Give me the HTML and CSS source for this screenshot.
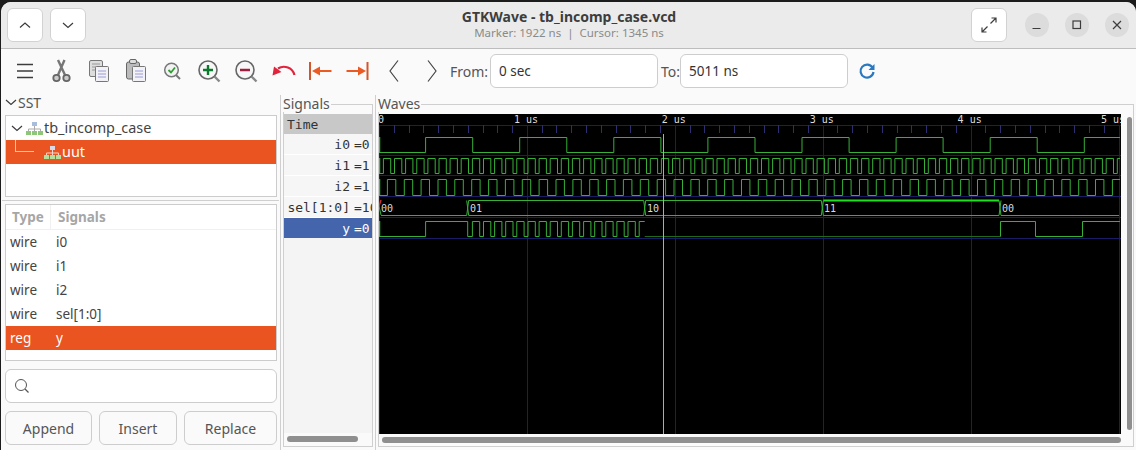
FILE: index.html
```html
<!DOCTYPE html>
<html lang="en">
<head>
    <meta charset="UTF-8">
    <meta name="viewport" content="width=device-width, initial-scale=1.0">
    <title>GTKWave - tb_incomp_case.vcd</title>
    <link rel="stylesheet" href="styles.css">
</head>
<body>
    <div class="window">
        <header class="titlebar">
            <div class="title-left">
                <button class="head-btn"><svg width="16" height="16" viewBox="0 0 16 16"><path d="M3 10.5 8 6l5 4.5" class="thin"/></svg></button>
                <button class="head-btn"><svg width="16" height="16" viewBox="0 0 16 16"><path d="M3 6l5 4.5L13 6" class="thin"/></svg></button>
            </div>
            <div class="title-text">
                <div class="title-main">GTKWave - tb_incomp_case.vcd</div>
                <div class="title-sub">Marker: 1922 ns &nbsp;|&nbsp; Cursor: 1345 ns</div>
            </div>
            <div class="title-right">
                <button class="head-btn expand"><svg width="18" height="18" viewBox="0 0 18 18"><path d="M10.5 7.5 16 2M11.5 2H16v4.5M7.5 10.5 2 16M2 11.5V16h4.500" class="thin"/></svg></button>
                <button class="win-btn"><svg width="12" height="12" viewBox="0 0 12 12"><path d="M1.500 9.500h8" class="thin"/></svg></button>
                <button class="win-btn"><svg width="12" height="12" viewBox="0 0 12 12"><rect x="2" y="2" width="7.500" height="7.500" class="thin"/></svg></button>
                <button class="win-btn"><svg width="12" height="12" viewBox="0 0 12 12"><path d="M2 2l8 8M10 2l-8 8" class="thin"/></svg></button>
            </div>
        </header>

        <div class="toolbar">
            <div class="tool"><svg width="20" height="20" viewBox="0 0 20 20"><path d="M2 3.500h16M2 10h16M2 16.500h16" stroke="#3c3c3c" stroke-width="1.300" fill="none"/></svg></div>
            <div class="tool"><svg width="24" height="26" viewBox="0 0 24 26"><path d="M8 2l7 15M14.500 2L8 17" stroke="#777" stroke-width="2.400" fill="none"/><circle cx="6.500" cy="20" r="3.200" stroke="#666" stroke-width="1.800" fill="#ccc"/><circle cx="16.500" cy="20" r="3.200" stroke="#666" stroke-width="1.800" fill="#ccc"/></svg></div>
            <div class="tool"><svg width="24" height="26" viewBox="0 0 24 26"><rect x="2.500" y="2.500" width="13" height="16" rx="1.500" fill="#ddd" stroke="#777"/><path d="M5 6h8M5 9h8M5 12h5" stroke="#999"/><rect x="8.500" y="8.500" width="13" height="15" rx="1" fill="#f1f1f6" stroke="#777"/><path d="M11 13h8M11 16h8M11 19h8" stroke="#9a9ad6"/></svg></div>
            <div class="tool"><svg width="24" height="26" viewBox="0 0 24 26"><rect x="2.500" y="4" width="13" height="17" rx="2" fill="#bbb" stroke="#666"/><rect x="5.500" y="1.500" width="7" height="4" rx="1.500" fill="#ddd" stroke="#666"/><rect x="8.500" y="8.500" width="13" height="15" rx="1" fill="#f1f1f6" stroke="#777"/><path d="M11 13h8M11 16h8M11 19h8" stroke="#9a9ad6"/></svg></div>
            <div class="tool"><svg width="24" height="24" viewBox="0 0 24 24"><circle cx="10.500" cy="11" r="6.800" fill="#f2f2f2" stroke="#777" stroke-width="1.500"/><path d="M15 16l4 4" stroke="#777" stroke-width="2"/><path d="M7.500 11l2.500 2.500 4-5" stroke="#2f9e2f" stroke-width="1.800" fill="none"/></svg></div>
            <div class="tool"><svg width="26" height="26" viewBox="0 0 26 26"><circle cx="11" cy="12" r="9" fill="#f7f7f7" stroke="#666" stroke-width="1.600"/><path d="M17.500 18.500l5 5" stroke="#888" stroke-width="2.400"/><path d="M6 12h10M11 7v10" stroke="#0c7a2c" stroke-width="2.400"/></svg></div>
            <div class="tool"><svg width="26" height="26" viewBox="0 0 26 26"><circle cx="11" cy="12" r="9" fill="#f7f7f7" stroke="#666" stroke-width="1.600"/><path d="M17.500 18.500l5 5" stroke="#888" stroke-width="2.400"/><path d="M6 12h10" stroke="#a01c3c" stroke-width="2.400"/></svg></div>
            <div class="tool"><svg width="26" height="20" viewBox="0 0 26 20"><path d="M23.500 14A11 11 0 0 0 7 7.500" stroke="#e0243c" stroke-width="2.200" fill="none"/><path d="M1.500 14.500 3 5.500l7.500 5.500z" fill="#e0243c"/></svg></div>
            <div class="tool"><svg width="26" height="20" viewBox="0 0 26 20"><path d="M2 1v18" stroke="#d2562a" stroke-width="2"/><path d="M10 10h13.500" stroke="#ec5a24" stroke-width="2"/><path d="M4 10l8-4.500v9z" fill="#ec5a24"/></svg></div>
            <div class="tool"><svg width="26" height="20" viewBox="0 0 26 20"><path d="M22.500 1v18" stroke="#d2562a" stroke-width="2"/><path d="M1.500 10h13" stroke="#ec5a24" stroke-width="2"/><path d="M21 10l-8-4.500v9z" fill="#ec5a24"/></svg></div>
            <div class="tool nudge"><svg width="12" height="24" viewBox="0 0 12 24"><path d="M10 1.500 2 12l8 10.500" stroke="#444" stroke-width="1.200" fill="none"/></svg></div>
            <div class="tool"><svg width="12" height="24" viewBox="0 0 12 24"><path d="M2 1.500 10 12 2 22.500" stroke="#444" stroke-width="1.200" fill="none"/></svg></div>
            <span class="range-label from-label">From:</span>
            <div class="entry from-entry">0 sec</div>
            <span class="range-label to-label">To:</span>
            <div class="entry to-entry">5011 ns</div>
            <div class="refresh"><svg width="18" height="18" viewBox="0 0 18 18"><path d="M14.500 5.500A6.500 6.500 0 1 0 15.500 10" stroke="#2a78c0" stroke-width="2.200" fill="none"/><path d="M16.500 2v6h-6z" fill="#2a78c0"/></svg></div>
        </div>

        <div class="main">
            <aside class="left-panel">
                <div class="sst-head"><svg width="12" height="12" viewBox="0 0 12 12"><path d="M1 4l5 4.500L11 4" class="thin"/></svg><span>SST</span></div>
                <div class="tree-box">
                    <div class="tree-row">
                        <svg class="chevron" width="12" height="12" viewBox="0 0 12 12"><path d="M1 4l5 4.500L11 4" class="thin"/></svg>
                        <svg class="hier" width="17" height="13" viewBox="0 0 17 13"><path d="M8.500 4v3M2.500 9V7h12v2M8.500 7v2" stroke="#aaa" fill="none"/><rect x="6" y="0" width="5" height="4" fill="#a8bcdc"/><rect x="0" y="9" width="5" height="4" fill="#8cc878"/><rect x="6" y="9" width="5" height="4" fill="#8cc878"/><rect x="12" y="9" width="5" height="4" fill="#8cc878"/></svg>
                        <span>tb_incomp_case</span>
                    </div>
                    <div class="tree-row selected child">
                        <span class="elbow"></span>
                        <svg class="hier" width="17" height="13" viewBox="0 0 17 13"><path d="M8.500 4v3M2.500 9V7h12v2M8.500 7v2" stroke="#f0d8d0" fill="none"/><rect x="6" y="0" width="5" height="4" fill="#d8d8e8"/><rect x="0" y="9" width="5" height="4" fill="#b4e09c"/><rect x="6" y="9" width="5" height="4" fill="#b4e09c"/><rect x="12" y="9" width="5" height="4" fill="#b4e09c"/></svg>
                        <span>uut</span>
                    </div>
                </div>
                <div class="pane-line"></div>
                <div class="signal-box">
                    <div class="sig-head"><span class="col-type">Type</span><span class="col-name">Signals</span></div>
                    <div class="sig-row"><span class="col-type">wire</span><span class="col-name">i0</span></div>
                    <div class="sig-row"><span class="col-type">wire</span><span class="col-name">i1</span></div>
                    <div class="sig-row"><span class="col-type">wire</span><span class="col-name">i2</span></div>
                    <div class="sig-row"><span class="col-type">wire</span><span class="col-name">sel[1:0]</span></div>
                    <div class="sig-row selected"><span class="col-type">reg</span><span class="col-name">y</span></div>
                </div>
                <div class="search-box"><svg width="16" height="16" viewBox="0 0 16 16"><circle cx="7" cy="7" r="5.500" stroke="#555" fill="none"/><path d="M11 11l3.500 3.500" stroke="#555" stroke-width="1.200"/></svg></div>
                <div class="action-row">
                    <button class="action append">Append</button>
                    <button class="action insert">Insert</button>
                    <button class="action replace">Replace</button>
                </div>
            </aside>

            <section class="frame signals-frame">
                <span class="frame-label">Signals</span>
                <div class="name-list">
                    <div class="name-row time-row">Time</div>
                    <div class="name-row"><span class="n">i0</span><span class="v">=0</span></div>
                    <div class="name-row"><span class="n">i1</span><span class="v">=1</span></div>
                    <div class="name-row"><span class="n">i2</span><span class="v">=1</span></div>
                    <div class="name-row"><span class="n">sel[1:0]</span><span class="v">=10</span></div>
                    <div class="name-row active"><span class="n">y</span><span class="v">=0</span></div>
                </div>
                <div class="hscroll short"><div class="thumb"></div></div>
            </section>

            <div class="pane-split"></div>

            <section class="frame waves-frame">
                <span class="frame-label">Waves</span>
                <div class="wave-grid">
                    <svg id="waves" class="wave-canvas" width="742" height="320" viewBox="0 0 742 320"></svg>
                    <div class="vscroll"><div class="thumb"></div></div>
                    <div class="hscroll long"><div class="thumb"></div></div>
                </div>
            </section>
        </div>
    </div>
    <script src="wave.js"></script>
</body>
</html>
```
FILE: styles.css
```css
* {
    box-sizing: border-box;
}

body {
    margin: 0;
    padding: 2px 0 0 1px;
    width: 1136px;
    height: 450px;
    overflow: hidden;
    background-color: #1c1c1c;
    font-family: "Noto Sans", sans-serif;
    color: #333;
}

.window {
    width: 1135px;
    height: 448px;
    background-color: #fafafa;
    border-radius: 10px 10px 0 0;
    overflow: hidden;
    display: flex;
    flex-direction: column;
}

.thin {
    stroke: #3c3c3c;
    stroke-width: 1.2;
    fill: none;
}

button {
    font-family: inherit;
    padding: 0;
}

/* title bar */
.titlebar {
    height: 47px;
    flex: none;
    background-color: #ebebeb;
    border-bottom: 1px solid #bdbdbd;
    display: flex;
    align-items: center;
    justify-content: space-between;
    padding: 0 7px 1px 6px;
    position: relative;
}

.title-left,
.title-right {
    display: flex;
    align-items: center;
    gap: 7px;
}

.head-btn {
    width: 36px;
    height: 34px;
    background-color: #fff;
    border: 1px solid #d2d2d2;
    border-radius: 6px;
    display: flex;
    align-items: center;
    justify-content: center;
}

.expand {
    margin-right: 11px;
}

.win-btn {
    width: 24px;
    height: 24px;
    margin-right: 9px;
    border: none;
    border-radius: 50%;
    background-color: #dcdcdc;
    display: flex;
    align-items: center;
    justify-content: center;
}

.win-btn:last-child {
    margin-right: 0;
}

.title-text {
    position: absolute;
    left: 368px;
    width: 400px;
    text-align: center;
    line-height: 15px;
}

.title-main {
    font-size: 14px;
    font-weight: 700;
    color: #3d3d3d;
    margin-bottom: 1px;
}

.title-sub {
    font-size: 11.500px;
    color: #8a8a8a;
}

/* toolbar */
.toolbar {
    height: 46px;
    flex: none;
    display: flex;
    align-items: center;
    padding: 0 0 2px 5px;
}

.tool {
    width: 37px;
    display: flex;
    align-items: center;
    justify-content: center;
}

.nudge svg {
    margin-right: 2px;
}

.range-label {
    font-size: 14px;
    color: #555;
}

.from-label {
    width: 40px;
}

.to-label {
    width: 19px;
    margin-left: 3px;
}

.entry {
    height: 34px;
    background-color: #fff;
    border: 1px solid #cdcdcd;
    border-radius: 6px;
    font-size: 13.500px;
    line-height: 32px;
    padding-left: 8px;
    color: #333;
}

.from-entry {
    width: 168px;
}

.to-entry {
    width: 168px;
}

.refresh {
    margin-left: 10px;
    width: 18px;
    height: 18px;
}

/* main panes */
.main {
    flex: 1;
    display: flex;
    min-height: 0;
}

.left-panel {
    width: 280px;
    flex: none;
    border-right: 1px solid #cfcfcf;
    display: flex;
    flex-direction: column;
    padding: 0 3px 0 4px;
    font-size: 13.500px;
}

.sst-head {
    height: 20px;
    padding-bottom: 6px;
    display: flex;
    align-items: center;
    gap: 1px;
    color: #555;
    font-size: 14px;
}

.tree-box {
    height: 82px;
    background-color: #fff;
    border: 1px solid #cccccc;
}

.tree-row {
    height: 24px;
    display: flex;
    align-items: center;
    color: #444;
    font-size: 14.400px;
}

.tree-row span {
    line-height: 24px;
}

.chevron {
    margin-left: 5px;
}

.tree-row .hier {
    margin-left: 3px;
    margin-right: 1px;
}

.selected {
    background-color: #e95420;
    color: #fff;
}

.child {
    position: relative;
    padding-left: 38px;
}

.child .hier {
    margin-left: 0;
}

.elbow {
    position: absolute;
    left: 9px;
    top: 0;
    width: 19px;
    height: 12px;
    border-left: 1px solid #f4c4b0;
    border-bottom: 1px solid #f4c4b0;
}

.pane-line {
    height: 1px;
    margin: 3px -2px 3px -3px;
    background-color: #cfcfcf;
}

.signal-box {
    height: 157px;
    background-color: #fff;
    border: 1px solid #cccccc;
}

.sig-head {
    height: 25px;
    display: flex;
    align-items: center;
    border-bottom: 1px solid #f0f0f0;
    font-weight: 700;
    color: #a6a6a6;
}

.sig-row {
    height: 24px;
    display: flex;
    align-items: center;
    color: #444;
}

.sig-row.selected {
    color: #fff;
}

.col-type {
    width: 45px;
    padding-left: 4px;
}

.sig-head .col-type {
    padding-left: 6px;
    border-right: 1px solid #f0f0f0;
    height: 24px;
    line-height: 24px;
}

.col-name {
    padding-left: 5px;
}

.sig-head .col-name {
    padding-left: 7px;
}

.search-box {
    height: 34px;
    margin-top: 8px;
    background-color: #fff;
    border: 1px solid #cdcdcd;
    border-radius: 6px;
    display: flex;
    align-items: center;
    padding-left: 8px;
}

.action-row {
    display: flex;
    gap: 7px;
    margin-top: 8px;
}

.action {
    height: 34px;
    background-color: #fafafa;
    border: 1px solid #cdcdcd;
    border-radius: 6px;
    font-size: 14px;
    color: #555;
}

.append {
    width: 87px;
}

.insert {
    width: 78px;
}

.replace {
    width: 93px;
}

/* framed panes */
.frame {
    position: relative;
    margin: 9px 0 3px 0;
    border: 1px solid #cfcfcf;
    padding-top: 9px;
}

.frame-label {
    position: absolute;
    left: -1px;
    top: -9px;
    padding-right: 1px;
    background-color: #fafafa;
    font-size: 14px;
    line-height: 16px;
    color: #555;
}

.signals-frame {
    margin-left: 2px;
    width: 90px;
    display: flex;
    flex-direction: column;
}

.name-list {
    flex: 1;
    background-color: #f4f4f4;
    font-family: "DejaVu Sans Mono", monospace;
    font-size: 13px;
    color: #333;
    overflow: hidden;
}

.name-row {
    height: 21px;
    display: flex;
    align-items: center;
    background-color: #f6f6f6;
    border-bottom: 1px solid #fff;
    white-space: nowrap;
    line-height: 20px;
    padding-top: 1px;
}

.name-row .n {
    width: 66px;
    flex: none;
    text-align: right;
}

.name-row .v {
    margin-left: 4px;
}

.time-row {
    height: 20px;
    border-bottom: none;
    background-color: #c8c8c8;
    padding-left: 3px;
}

.active {
    background-color: #4464ab;
    color: #fff;
    height: 20px;
    border-bottom: none;
}

.pane-split {
    width: 1px;
    margin: 0 2px;
    background-color: #cfcfcf;
}

.waves-frame {
    width: 756px;
}

.wave-grid {
    display: grid;
    grid-template-columns: 742px 1fr;
    grid-template-rows: 320px 1fr;
}

.wave-canvas {
    display: block;
    background-color: #000;
}

.wave-canvas text {
    font-family: "DejaVu Sans Mono", monospace;
    font-size: 10px;
    fill: #dcdcdc;
}

.hscroll {
    height: 13px;
    padding-top: 3px;
}

.hscroll .thumb {
    height: 6px;
    background-color: #8f8f8f;
    border-radius: 3px;
}

.hscroll.short {
    flex: none;
    padding-left: 3px;
}

.hscroll.short .thumb {
    width: 71px;
}

.hscroll.long {
    padding-left: 3px;
}

.vscroll {
    padding: 3px 0 0 6px;
}

.vscroll .thumb {
    width: 5px;
    height: 313px;
    background-color: #8f8f8f;
    border-radius: 3px;
}
```
FILE: wave.js
```js
// Draws the waveform view into the #waves svg. x is px from left edge of the canvas.
const svg = document.getElementById('waves');
const NS = 'http://www.w3.org/2000/svg';
const PX_PER_US = 147.9;
const WIDTH = 742;
const GREEN = '#38b038';

function add(tag, attrs, text) {
    const el = document.createElementNS(NS, tag);
    for (const k in attrs) el.setAttribute(k, attrs[k]);
    if (text) el.textContent = text;
    svg.appendChild(el);
    return el;
}

function line(x1, y1, x2, y2, color, w) {
    add('line', { x1, y1, x2, y2, stroke: color, 'stroke-width': w || 1 });
}

// edges = sorted x positions where the value toggles, starts low
function square(edges, high, low, endX) {
    let y = low;
    let d = 'M0.5 ' + low;
    edges.forEach(x => {
        d += ' H' + x.toFixed(1) + ' V' + (y === low ? high : low);
        y = y === low ? high : low;
    });
    d += ' H' + endX;
    add('path', { d, fill: 'none', stroke: GREEN, 'stroke-width': 1 });
}

function toggles(first, half, end) {
    const out = [];
    for (let x = first; x < end; x += half) out.push(x);
    return out;
}

// i1 is not 50% duty: about 7.3 high, 3.8 low
function clockEdges(end) {
    const out = [];
    for (let x = 4.4; x < end; x += 11.12) {
        out.push(x);
        if (x + 7.3 < end) out.push(x + 7.3);
    }
    return out;
}

const GRID = '#1c1c66';

// time ruler
line(0, 11.5, WIDTH, 11.5, GRID);
for (let i = 0; i <= 50; i++) {
    const x = Math.round(i * PX_PER_US / 10) + 0.5;
    if (i % 10 === 0) {
        line(x, 11, x, 320, GRID);
    } else {
        line(x, 11, x, 19, '#2f2f70');
    }
}
// the last label is pulled in a little, the way the ruler keeps it on screen
[['0', -1], ['1 us', 134.9], ['2 us', 282.8], ['3 us', 430.7], ['4 us', 578.6], ['5 us', 722]].forEach(([label, x]) => {
    add('text', { x, y: 9 }, label);
});

// row separators
[41, 61, 82, 103, 124].forEach(y => line(0, y + 0.5, WIDTH, y + 0.5, GRID));

// i0
square(toggles(46.6, 47.05, 740), 23.5, 38.5, 741);
// i1
square(clockEdges(741), 44.5, 59.5, 741);
// i2
square(toggles(8.4, 8.43, 741), 65.5, 81.5, 741);

// sel[1:0] bus
const BUS_TOP = 86.5;
const BUS_BOT = 101.5;
const busX = [88.7, 265.7, 443.3, 621];
line(2, BUS_BOT, busX[0] - 1, BUS_BOT, GREEN);
line(busX[0] + 1, BUS_TOP, busX[1] - 1, BUS_TOP, GREEN);
line(busX[0] + 1, BUS_BOT, busX[1] - 1, BUS_BOT, GREEN);
line(busX[1] + 1, BUS_TOP, busX[2] - 1, BUS_TOP, GREEN);
line(busX[1] + 1, BUS_BOT, busX[2] - 1, BUS_BOT, GREEN);
line(busX[2] + 1, BUS_TOP, busX[3] - 1, BUS_TOP, '#1fe01f', 2);
line(busX[2] + 1, BUS_BOT, busX[3] - 1, BUS_BOT, GREEN);
line(busX[3] + 1, BUS_BOT, 740, BUS_BOT, GREEN);
busX.forEach(x => {
    line(x - 1, BUS_TOP, x + 1, BUS_BOT, GREEN);
    line(x - 1, BUS_BOT, x + 1, BUS_TOP, GREEN);
});
[['00', 2], ['01', 91], ['10', 268], ['11', 445], ['00', 623]].forEach(([t, x]) => {
    add('text', { x, y: 98 }, t);
});

// y: follows i0, then i1 while sel=01, then low until sel=00 part
const Y_HIGH = 107.5;
const Y_LOW = 122.5;
const yEdges = [46.6, 88.7].concat(clockEdges(262.7).filter(x => x > 90));
square(yEdges, Y_HIGH, Y_LOW, 265.7);
line(265.7, Y_LOW, 621.5, Y_LOW, '#1f6a1f');
add('path', {
    d: 'M621.5 ' + Y_LOW + ' V' + Y_HIGH + ' H656.5 V' + Y_LOW + ' H703.5 V' + Y_HIGH + ' H741',
    fill: 'none', stroke: GREEN
});

// start-of-trace edges
[[23, 39], [44, 60], [65, 82], [107, 123]].forEach(([a, b]) => line(0.5, a, 0.5, b, '#27d027', 1.5));
line(0, 92, 2, 86, '#d03030', 1.5);
line(0, 92, 2, 101, GREEN);

// cursor
line(284.5, 20, 284.5, 320, '#e09a78');
```
